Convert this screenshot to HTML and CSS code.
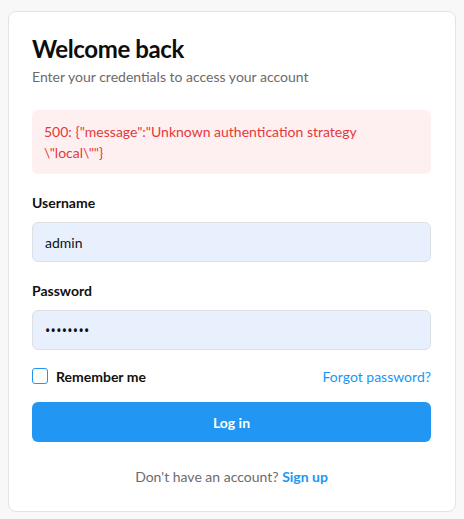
FILE: index.html
```html
<!DOCTYPE html>
<html lang="en">
<head>
<meta charset="utf-8">
<title>Login</title>
<link rel="stylesheet" href="styles.css">
</head>
<body>
<main class="card">
  <h1 class="title">Welcome back</h1>
  <p class="subtitle">Enter your credentials to access your account</p>
  <div class="error">500: {"message":"Unknown authentication strategy \"local\""}</div>
  <form class="form">
    <div class="field">
      <label class="label" for="u">Username</label>
      <input class="input" id="u" type="text" value="admin">
    </div>
    <div class="field field-last">
      <label class="label" for="p">Password</label>
      <input class="input input-pass" id="p" type="password" value="password">
    </div>
    <div class="row">
      <label class="check"><span class="box"></span>Remember me</label>
      <a class="link" href="#">Forgot password?</a>
    </div>
    <button class="btn" type="button">Log in</button>
  </form>
  <p class="footer">Don't have an account? <a class="signup" href="#">Sign up</a></p>
</main>
</body>
</html>
```
FILE: styles.css
```css
* { box-sizing: border-box; }
html, body { margin: 0; }
body {
  background: #f8f8f8;
  font-family: "Lato", "Noto Sans", sans-serif;
  color: #111;
  padding: 11px 8px 9px 8px;
}
.card {
  background: #fff;
  border: 1px solid #e3e3e3;
  border-radius: 8px;
  padding: 22px 24px 24px 23px;
  display: flex;
  flex-direction: column;
}
.title {
  margin: 0;
  font-size: 24px;
  line-height: 29px;
  font-weight: 700;
  color: #0d0d0d;
  letter-spacing: -0.4px;
}
.subtitle {
  margin: 4px 0 0;
  font-size: 14px;
  line-height: 20px;
  color: #6b6b6b;
}
.error {
  margin-top: 23px;
  background: #fef0f0;
  border-radius: 6px;
  padding: 11px 12px;
  font-size: 14px;
  line-height: 21px;
  color: #e5383b;
}
.form { display: flex; flex-direction: column; margin-top: 19px; }
.field { display: flex; flex-direction: column; margin-bottom: 19px; }
.field-last { margin-bottom: 16px; }
.label {
  font-size: 14px;
  font-weight: 700;
  line-height: 20px;
  margin-bottom: 9px;
  color: #111;
}
.input {
  height: 40px;
  border: 1px solid #dcdfe4;
  border-radius: 6px;
  background: #e8f0fe;
  padding: 0 12px;
  font-family: inherit;
  font-size: 14px;
  color: #111;
  outline: none;
}
.input-pass {
  font-family: "Noto Sans", sans-serif;
  letter-spacing: 0.3px;
}
.row {
  display: flex;
  justify-content: space-between;
  align-items: center;
  height: 20px;
}
.check {
  display: flex;
  align-items: center;
  gap: 8px;
  font-size: 14px;
  font-weight: 700;
}
.box {
  width: 16px;
  height: 16px;
  border: 1.5px solid #2196f3;
  border-radius: 3px;
}
.link {
  color: #2196f3;
  text-decoration: none;
  font-size: 14px;
}
.btn {
  margin-top: 16px;
  height: 40px;
  border: 0;
  border-radius: 6px;
  background: #2196f3;
  color: #fff;
  font-family: inherit;
  font-size: 14px;
  font-weight: 700;
}
.footer {
  margin: 25px 0 0;
  text-align: center;
  font-size: 14px;
  line-height: 20px;
  color: #6b6b6b;
}
.signup { color: #2196f3; font-weight: 700; text-decoration: none; }
```
